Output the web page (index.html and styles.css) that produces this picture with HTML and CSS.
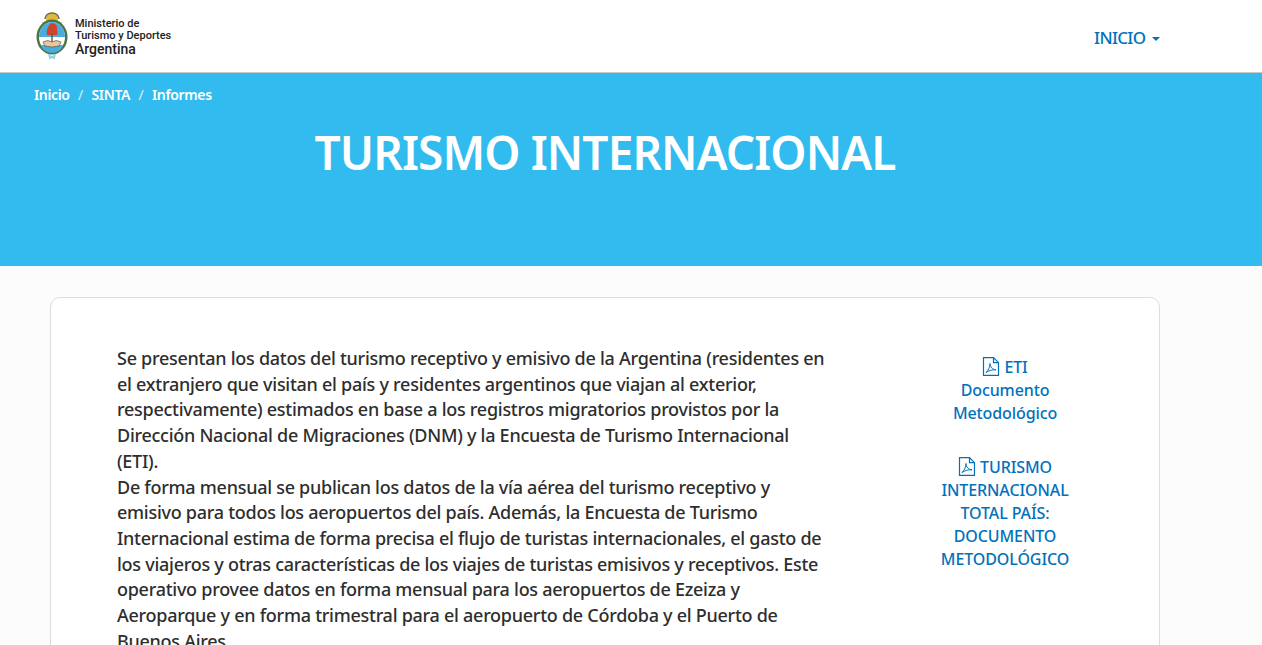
FILE: index.html
```html
<!DOCTYPE html>
<html lang="es">
<head>
  <meta charset="UTF-8">
  <meta name="viewport" content="width=device-width, initial-scale=1">
  <title>Turismo Internacional</title>
  <link rel="stylesheet" href="styles.css">
</head>
<body>
  <header class="topbar">
    <a class="logo">
      <svg class="escudo" width="32" height="48" viewBox="0 0 32 48">
        <!-- sol -->
        <circle cx="16" cy="7" r="6" fill="#e0b93f"/>
        <path d="M9 7 Q10 1 16 1 Q22 1 23 7" fill="none" stroke="#6e6a3c" stroke-width="1.500"/>
        <!-- laureles -->
        <ellipse cx="16" cy="25" rx="15.500" ry="17.500" fill="#4f7346"/>
        <ellipse cx="16" cy="25" rx="13" ry="15" fill="#fff"/>
        <path d="M3 25 A13 15 0 0 1 29 25 Z" fill="#45aede"/>
        <path d="M4.500 33 A13 15 0 0 0 27.500 33 Z" fill="#45aede"/>
        <!-- gorro -->
        <path d="M11 23 Q10 18 12 15.500 Q14 10 18 11.500 Q22 13 21 18 Q22 21 21 23 Z" fill="#d2432b"/>
        <rect x="15.300" y="22" width="1.400" height="10" fill="#6b5236"/>
        <!-- manos -->
        <path d="M7 30 Q12 27 16 30 Q20 27 25 30 L23 34 Q16 36 9 34 Z" fill="#e6c8a2" stroke="#5f5540" stroke-width=".7"/>
        <!-- cinta -->
        <path d="M12 42 L16 44 L20 42 L18.500 47.500 L16 46 L13.500 47.500 Z" fill="#8fd0ec"/>
      </svg>
      <span class="logo-text">
        <span>Ministerio de</span>
        <span>Turismo y Deportes</span>
        <span class="logo-pais">Argentina</span>
      </span>
    </a>
    <a class="menu">INICIO <i class="caret"></i></a>
  </header>

  <section class="banda">
    <nav class="migas">
      <a>Inicio</a><span>/</span><a>SINTA</a><span>/</span><a>Informes</a>
    </nav>
    <h1>TURISMO INTERNACIONAL</h1>
  </section>

  <main class="contenido">
    <div class="tarjeta">
      <div class="texto">
        Se presentan los datos del turismo receptivo y emisivo de la Argentina (residentes en el extranjero que visitan el país y residentes argentinos que viajan al exterior, respectivamente) estimados en base a los registros migratorios provistos por la Dirección Nacional de Migraciones (DNM) y la Encuesta de Turismo Internacional (ETI).<br>
        De forma mensual se publican los datos de la vía aérea del turismo receptivo y emisivo para todos los aeropuertos del país. Además, la Encuesta de Turismo Internacional estima de forma precisa el flujo de turistas internacionales, el gasto de los viajeros y otras características de los viajes de turistas emisivos y receptivos. Este operativo provee datos en forma mensual para los aeropuertos de Ezeiza y Aeroparque y en forma trimestral para el aeropuerto de Córdoba y el Puerto de Buenos Aires.
      </div>
      <aside class="documentos">
        <a class="doc doc-eti">
          <svg class="pdf" width="18" height="19" viewBox="0 0 18 19"><path d="M1.500 .7 H11.500 L16.500 5.700 V18.300 H1.500 Z M11.500 .7 V5.700 H16.500" fill="none" stroke="#0072bb" stroke-width="1.200"/><path d="M4 15.500 C6 14 8 10 8 6.500 C8 10 10.500 12.500 14 12.800 C10.500 12.500 7 13.500 4 15.500 Z" fill="none" stroke="#0072bb" stroke-width="1"/></svg>
          ETI<br>Documento<br>Metodológico
        </a>
        <a class="doc doc-pais">
          <svg class="pdf" width="18" height="19" viewBox="0 0 18 19"><path d="M1.500 .7 H11.500 L16.500 5.700 V18.300 H1.500 Z M11.500 .7 V5.700 H16.500" fill="none" stroke="#0072bb" stroke-width="1.200"/><path d="M4 15.500 C6 14 8 10 8 6.500 C8 10 10.500 12.500 14 12.800 C10.500 12.500 7 13.500 4 15.500 Z" fill="none" stroke="#0072bb" stroke-width="1"/></svg>
          TURISMO INTERNACIONAL TOTAL PAÍS: DOCUMENTO METODOLÓGICO
        </a>
      </aside>
    </div>
  </main>
</body>
</html>
```

FILE: styles.css
```css
html, body {
  height: 645px;
  overflow: hidden;
}

body {
  margin: 0;
  background: #fcfcfc;
  font-family: 'Noto Sans', 'Open Sans', sans-serif;
  color: #333;
}

.topbar {
  display: flex;
  justify-content: space-between;
  align-items: center;
  height: 72px;
  padding: 0 102px 0 36px;
  background: #fff;
  border-bottom: 1px solid #c9c9c9;
}

.logo {
  display: flex;
  align-items: center;
  gap: 6px;
}

.logo-text {
  display: flex;
  flex-direction: column;
  margin-left: 1px;
  padding-top: 2px;
  font-family: Roboto, sans-serif;
  font-size: 11px;
  line-height: 12px;
  font-weight: 500;
  color: #222;
}

.logo-pais {
  font-size: 14px;
  line-height: 15px;
}

.menu {
  padding-top: 2px;
  color: #0072bb;
  font-size: 17px;
  font-weight: 500;
  letter-spacing: -.7px;
}

.caret {
  display: inline-block;
  margin-left: 3px;
  vertical-align: middle;
  border-top: 4px solid #0072bb;
  border-left: 4px solid transparent;
  border-right: 4px solid transparent;
}

.banda {
  height: 193px;
  background: #32bbee;
  color: #fff;
  box-sizing: border-box;
  padding-top: 12px;
}

.migas {
  display: flex;
  gap: 8.500px;
  padding-left: 34px;
  font-size: 14px;
  line-height: 20px;
  font-weight: 600;
  letter-spacing: -.35px;
}

.migas span {
  font-weight: 400;
  opacity: .8;
}

h1 {
  margin: 21px 0 0;
  width: 1210px;
  text-align: center;
  font-size: 46px;
  line-height: 52px;
  font-weight: 600;
  letter-spacing: -.9px;
}

.contenido {
  padding: 31px 0 0 50px;
}

.tarjeta {
  display: flex;
  box-sizing: border-box;
  width: 1110px;
  height: 500px;
  padding: 48px 66px;
  background: #fff;
  border: 1px solid #ddd;
  border-radius: 10px;
}

.texto {
  width: 712px;
  font-size: 18px;
  line-height: 25.700px;
  font-weight: 500;
  letter-spacing: -.27px;
  color: #2e2e2e;
}

.documentos {
  display: flex;
  flex-direction: column;
  align-items: center;
  gap: 31px;
  width: 168px;
  margin-left: 92px;
  padding-top: 10px;
}

.doc {
  display: block;
  text-align: center;
  color: #0072bb;
  font-size: 16px;
  line-height: 23px;
  font-weight: 500;
  letter-spacing: -.1px;
}

.doc-pais {
  width: 140px;
}

.pdf {
  vertical-align: -3px;
}
```
